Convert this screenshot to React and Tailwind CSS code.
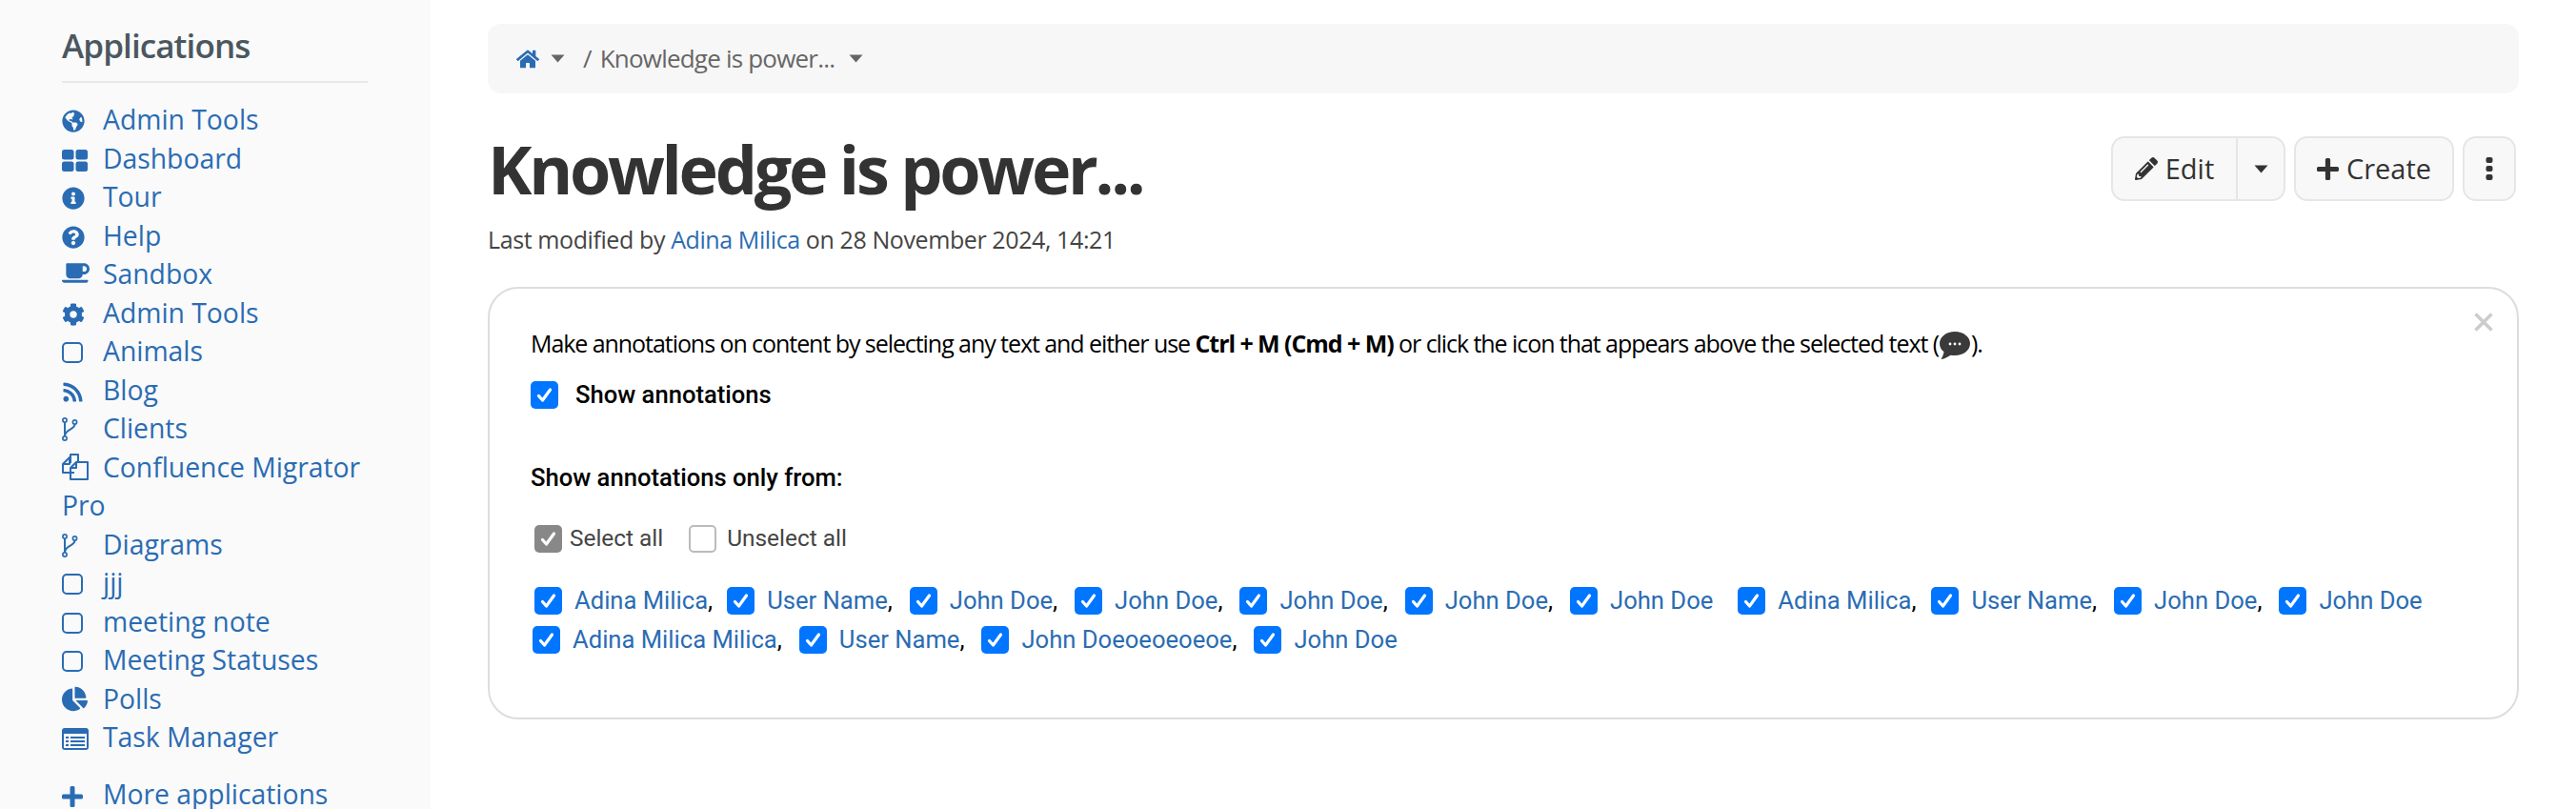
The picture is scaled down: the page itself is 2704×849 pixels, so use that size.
import React from "react";
import { FaGlobeAmericas, FaInfoCircle, FaQuestionCircle, FaCoffee, FaCog, FaRss, FaChartPie, FaHome, FaPencilAlt } from "react-icons/fa";

const Empty = () => (
  <span className="inline-block w-[22px] h-[22px] border-[2px] border-[#2a6cb3] rounded-[5px] align-[-2px]" />
);

const Fork = () => (
  <svg width="17" height="25" viewBox="0 0 17 25" fill="none" stroke="#2a6cb3" strokeWidth="1.7">
    <circle cx="3" cy="3" r="2.1" />
    <circle cx="3" cy="22" r="2.1" />
    <circle cx="13.500" cy="5" r="2.1" />
    <path d="M3 5.200v14.600M13.500 7.200c0 6-10.500 4.800-10.500 12.600" strokeWidth="2" />
  </svg>
);

const Dash = () => (
  <svg width="27" height="23" viewBox="0 0 27 23" fill="#2a6cb3">
    <rect x="0" y="0" width="12.500" height="10.500" rx="2.500" />
    <rect x="14.500" y="0" width="12.500" height="10.500" rx="2.500" />
    <rect x="0" y="12.500" width="12.500" height="10.500" rx="2.500" />
    <rect x="14.500" y="12.500" width="12.500" height="10.500" rx="2.500" />
  </svg>
);

const Files = () => (
  <svg width="28" height="28" viewBox="0 0 28 28" fill="none" stroke="#2a6cb3" strokeWidth="2" strokeLinejoin="round">
    <path d="M13 20H1v-9l7-7h1" />
    <path d="M8 4v7H1" />
    <path d="M9 10V1h8v8" />
    <path d="M15 9h12v18H9V15z" />
    <path d="M15 9v6H9" />
  </svg>
);

const ListAlt = () => (
  <svg width="28" height="23" viewBox="0 0 28 23">
    <rect x="0" y="0" width="28" height="23" rx="3" fill="#2a6cb3" />
    <rect x="2" y="6" width="24" height="15" fill="#fafafa" />
    <path d="M4 9h3v2H4zM9 9h15v2H9zM4 13h3v2H4zM9 13h15v2H9zM4 17h3v2H4zM9 17h15v2H9z" fill="#2a6cb3" />
  </svg>
);

const Plus = ({ size = 22, color = "currentColor" }) => (
  <svg width={size} height={size} viewBox="0 0 22 22" fill={color}>
    <path d="M8.500 1.500a1.500 1.500 0 0 1 1.500-1.500h2a1.500 1.500 0 0 1 1.500 1.500v7h7a1.500 1.500 0 0 1 1.500 1.500v2a1.500 1.500 0 0 1-1.500 1.500h-7v7a1.500 1.500 0 0 1-1.500 1.500h-2a1.500 1.500 0 0 1-1.500-1.500v-7h-7a1.500 1.500 0 0 1-1.500-1.500v-2a1.500 1.500 0 0 1 1.500-1.500h7z" />
  </svg>
);

const Caret = ({ className = "", color = "currentColor" }) => (
  <svg width="15" height="9" viewBox="0 0 15 9" className={className}>
    <path d="M0.500 0.500h14L7.500 8.500z" fill={color} />
  </svg>
);

const Dots = () => (
  <svg width="8" height="24" viewBox="0 0 8 24" fill="currentColor">
    <rect x="0.500" y="0" width="7" height="6" rx="2" />
    <rect x="0.500" y="9" width="7" height="6" rx="2" />
    <rect x="0.500" y="18" width="7" height="6" rx="2" />
  </svg>
);

const Close = ({ className = "" }) => (
  <svg width="20" height="20" viewBox="0 0 20 20" fill="none" stroke="#cccccc" strokeWidth="3.600" className={className}>
    <path d="M1.500 1.500 18.500 18.500M18.500 1.500 1.500 18.500" />
  </svg>
);

const apps = [
  ["Admin Tools", <FaGlobeAmericas size={24} />],
  ["Dashboard", <Dash />],
  ["Tour", <FaInfoCircle size={24} />],
  ["Help", <FaQuestionCircle size={24} />],
  ["Sandbox", <FaCoffee size={29} />],
  ["Admin Tools", <FaCog size={24} />],
  ["Animals", <Empty />],
  ["Blog", <FaRss size={23} />],
  ["Clients", <Fork />],
  ["Confluence Migrator Pro", <Files />],
  ["Diagrams", <Fork />],
  ["jjj", <Empty />],
  ["meeting note", <Empty />],
  ["Meeting Statuses", <Empty />],
  ["Polls", <FaChartPie size={27} />],
  ["Task Manager", <ListAlt />],
];

const Check = ({ gray, off, className = "" }) => (
  <span
    className={`inline-flex shrink-0 items-center justify-center w-[29px] h-[29px] rounded-[5px] ${
      off ? "bg-white border-[2px] border-[#bbbbbb]" : gray ? "bg-[#888888]" : "bg-[#0075ff]"
    } ${className}`}
  >
    {!off && (
      <svg width="19" height="19" viewBox="0 0 19 19" fill="none" stroke="white" strokeWidth="3.2" strokeLinecap="round" strokeLinejoin="round">
        <path d="M3.5 10.5 7.5 15 15.5 4" />
      </svg>
    )}
  </span>
);

const User = ({ name, comma = true, className = "" }) => (
  <span className={`inline-flex items-center ${className}`}>
    <Check className="mr-[13px]" />
    <span className="text-[#2a6cb3] whitespace-nowrap">{name}</span>
    {comma && <span className="text-black">,</span>}
  </span>
);

const Bubble = () => (
  <svg width="32" height="29" viewBox="0 0 32 29" className="inline-block align-[-7px] mx-[1px]">
    <path d="M16 0C7 0 0 5.500 0 12.500c0 3.500 1.700 6.600 4.500 8.800C4 24 3 26.500 1.500 29c4-.6 7.500-2.500 10-4.300 1.400.3 3 .3 4.500.3 9 0 16-5.500 16-12.500S25 0 16 0Z" fill="#3a3a3a" />
    <circle cx="11" cy="13" r="1.400" fill="white" />
    <circle cx="16" cy="13" r="1.400" fill="white" />
    <circle cx="21" cy="13" r="1.400" fill="white" />
  </svg>
);

const openSans = "font-['Open_Sans',sans-serif]";
const roboto = "font-['Roboto',sans-serif]";
const iconCell = "inline-block w-[43px] [&>svg]:inline-block [&>svg]:align-[-3px]";

export default function App() {
  return (
    <div className={`flex w-[2704px] h-[849px] overflow-hidden bg-white ${openSans}`}>
      <aside className="w-[452px] shrink-0 bg-[#fafafa] pl-[65px] pr-[66px] pt-[24px]">
        <h2 className="text-[35px] leading-[48px] font-semibold tracking-[-0.9px] text-[#4b5760] pb-[13px] border-b-[2px] border-[#e8e8e8] mb-[18px]">Applications</h2>
        <ul className="text-[28.3px] leading-[40.5px] text-[#2a6cb3]">
          {apps.map(([label, icon], i) => (
            <li key={i}>
              <span className={iconCell}>{icon}</span>
              {label}
            </li>
          ))}
          <li className="mt-[19px]">
            <span className={iconCell}><Plus size={22} /></span>
            More applications
          </li>
        </ul>
      </aside>

      <main className="flex-1 pl-[60px] pr-[60px] pt-[25px]">
        <nav className="flex items-center h-[73px] w-[2132px] rounded-[14px] bg-[#f7f7f7] pl-[30px] text-[26px] tracking-[-0.8px] text-[#666666]">
          <FaHome size={24} className="text-[#2a6cb3]" />
          <Caret className="ml-[12px]" />
          <span className="ml-[19px]">/</span>
          <span className="ml-[9px]">Knowledge is power...</span>
          <Caret className="ml-[15px]" />
        </nav>

        <div className="flex justify-between w-[2132px] mt-[31px]">
          <div>
            <h1 className="text-[70px] leading-[96px] font-bold text-[#333333] tracking-[-3.3px]">Knowledge is power...</h1>
            <p className="text-[25px] leading-[36px] text-[#444444] tracking-[-0.4px] mt-[8px]">
              Last modified by <span className="text-[#2a6cb3]">Adina Milica</span> on 28 November 2024, 14:21
            </p>
          </div>
          <div className="flex items-start gap-[9px] text-[29px] text-[#333333] pr-[3px] mt-[14px]">
            <div className="flex h-[68px] border-[2px] border-[#e6e6e6] rounded-[14px] bg-[#f8f8f8]">
              <span className="flex items-center gap-[8px] w-[131px] justify-center border-r-[2px] border-[#e6e6e6]">
                <FaPencilAlt size={24} /> Edit
              </span>
              <span className="flex items-center justify-center w-[48px]"><Caret /></span>
            </div>
            <div className="flex items-center justify-center gap-[8px] w-[168px] h-[68px] border-[2px] border-[#e6e6e6] rounded-[14px] bg-[#f8f8f8]">
              <Plus size={23} /> Create
            </div>
            <div className="flex items-center justify-center w-[56px] h-[68px] border-[2px] border-[#e6e6e6] rounded-[14px] bg-[#f8f8f8]">
              <Dots />
            </div>
          </div>
        </div>

        <section className="relative w-[2132px] h-[454px] mt-[32px] border-[2px] border-[#dddddd] rounded-[32px] pl-[43px] pt-[38px] text-[25px] text-black">
          <Close className="absolute right-[25px] top-[25px]" />
          <p className="leading-[38px] tracking-[-1.06px] whitespace-nowrap">
            Make annotations on content by selecting any text and either use <b>Ctrl + M (Cmd + M)</b> or click the icon that appears above the selected text (<Bubble />).
          </p>
          <div className={`flex items-center gap-[18px] mt-[21px] text-[25.6px] font-medium h-[29px] ${roboto}`}>
            <Check />
            <span>Show annotations</span>
          </div>
          <p className={`mt-[57px] leading-[30px] text-[25.6px] font-medium ${roboto}`}>Show annotations only from:</p>
          <div className={`flex items-center ml-[4px] mt-[34px] h-[30px] text-[24.4px] text-[#444444] ${roboto}`}>
            <Check gray />
            <span className="ml-[8px]">Select all</span>
            <Check off className="ml-[27px]" />
            <span className="ml-[11px]">Unselect all</span>
          </div>
          <div className={`flex items-center ml-[4px] mt-[35px] h-[30px] text-[25.6px] ${roboto}`}>
            <User name="Adina Milica" className="mr-[15px]" />
            <User name="User Name" className="mr-[18px]" />
            <User name="John Doe" className="mr-[18px]" />
            <User name="John Doe" className="mr-[18px]" />
            <User name="John Doe" className="mr-[18px]" />
            <User name="John Doe" className="mr-[18px]" />
            <User name="John Doe" comma={false} className="mr-[26px]" />
            <User name="Adina Milica" className="mr-[16px]" />
            <User name="User Name" className="mr-[18px]" />
            <User name="John Doe" className="mr-[18px]" />
            <User name="John Doe" comma={false} />
          </div>
          <div className={`flex items-center ml-[2px] mt-[11px] h-[30px] text-[25.6px] ${roboto}`}>
            <User name="Adina Milica Milica" className="mr-[18px]" />
            <User name="User Name" className="mr-[18px]" />
            <User name="John Doeoeoeoeoe" className="mr-[18px]" />
            <User name="John Doe" comma={false} />
          </div>
        </section>
      </main>
    </div>
  );
}
